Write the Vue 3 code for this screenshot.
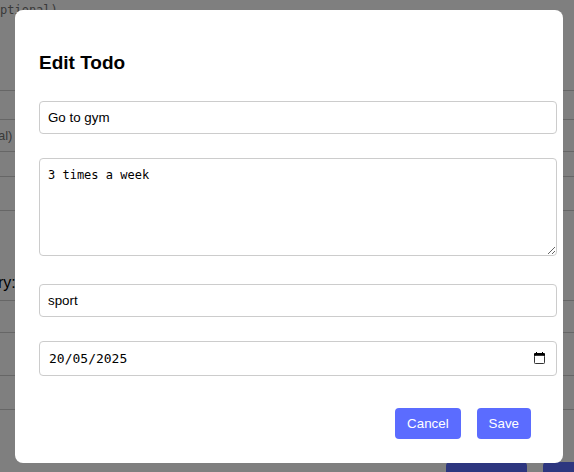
<script setup>
import { ref } from 'vue'

const title = ref('Go to gym')
const description = ref('3 times a week')
const category = ref('sport')
const dueDate = ref('20/05/2025')
</script>

<template>
  <div class="screen">
    <div class="page" aria-hidden="true">
      <div class="description">ptional)</div>
      <div class="field category-field">al)</div>
      <div class="field date-field"></div>
      <div class="filter-label">ry:</div>
      <div class="field filter-field"></div>
      <div class="field todo-field"></div>
      <div class="page-actions">
        <span class="page-button"></span>
        <span class="page-button last"></span>
      </div>
    </div>

    <div class="overlay">
      <form class="modal" role="dialog" aria-labelledby="modal-title" @submit.prevent>
        <h3 id="modal-title">Edit Todo</h3>
        <input v-model="title" class="control" type="text" aria-label="Title">
        <textarea v-model="description" class="control notes" aria-label="Description"></textarea>
        <input v-model="category" class="control category" type="text" aria-label="Category">
        <div class="control date">
          <input v-model="dueDate" type="text" aria-label="Due date">
          <button class="picker" type="button" aria-label="Open calendar">
            <svg width="11" height="12" viewBox="0 0 11 12">
              <path d="M2 0h1v1h5V0h1v1h1q1 0 1 1v2H0V2q0-1 1-1h1z" fill="#000" />
              <rect x="0.5" y="3.5" width="10" height="8" rx="0.8" fill="none" stroke="#333" />
            </svg>
          </button>
        </div>
        <div class="actions">
          <button class="action" type="button">Cancel</button>
          <button class="action" type="submit">Save</button>
        </div>
      </form>
    </div>
  </div>
</template>

<style>
body {
  margin: 0;
  overflow: hidden;
  background: #fff;
}
</style>

<style scoped>
.screen {
  font-family: "Liberation Sans", Arial, sans-serif;
  color: #000;
}

.page {
  display: flex;
  flex-direction: column;
  height: 100vh;
  overflow: hidden;
}

.page > * {
  box-sizing: border-box;
  flex: none;
}

.description {
  height: 91px;
  padding-top: 3px;
  border-bottom: 1px solid #ccc;
  font: 12px/14px "DejaVu Sans Mono", monospace;
  color: #757575;
}

.field {
  height: 33px;
  border: solid #ccc;
  border-width: 1px 0;
  font-size: 13px;
  line-height: 31px;
  text-indent: -2px;
  color: #757575;
}

.category-field {
  margin-top: 28px;
}

.date-field {
  height: 35px;
  margin-top: 24px;
}

.filter-label {
  margin-top: 62px;
  font-size: 16px;
  line-height: 20px;
  text-indent: -2px;
}

.filter-field {
  margin-top: 7px;
}

.todo-field {
  height: 35px;
  margin-top: 42px;
}

.page-actions {
  display: flex;
  justify-content: flex-end;
  gap: 16px;
  margin-top: 52px;
}

.page-button {
  width: 81px;
  height: 31px;
  border-radius: 4px;
  background: #5b6cff;
}

.page-button.last {
  width: 31px;
  border-radius: 4px 0 0 4px;
}

.overlay {
  position: fixed;
  inset: 0;
  box-sizing: border-box;
  padding: 10px 11px 9px 15px;
  background: rgba(0, 0, 0, 0.5);
}

.modal {
  display: flex;
  flex-direction: column;
  padding: 40px 24px 24px;
  border-radius: 8px;
  background: #fff;
}

h3 {
  margin: 0 0 25px;
  font-size: 19px;
  line-height: 26px;
}

.control {
  box-sizing: border-box;
  width: calc(100% + 18px);
  height: 33px;
  margin: 0 0 24px;
  padding: 8px;
  border: 1px solid #ccc;
  border-radius: 4px;
  outline: none;
  background: #fff;
  color: #000;
  font-family: inherit;
}

.notes {
  height: 98px;
  margin-bottom: 28px;
  font: 12px/16px "DejaVu Sans Mono", monospace;
  resize: both;
}

.date {
  display: flex;
  align-items: center;
  height: 35px;
  margin-bottom: 32px;
  padding: 0 11px 0 9px;
}

.date input {
  flex: 1;
  min-width: 0;
  padding: 0;
  border: 0;
  outline: none;
  background: none;
  font: 13px/16px "DejaVu Sans Mono", monospace;
}

.picker {
  display: flex;
  padding: 0 0 2px;
  border: 0;
  background: none;
}

.actions {
  display: flex;
  justify-content: flex-end;
  gap: 16px;
  padding-right: 8px;
}

.action {
  height: 31px;
  padding: 0 12px;
  border: 0;
  border-radius: 4px;
  background: #5b6cff;
  color: #fff;
  font-family: inherit;
}
</style>
